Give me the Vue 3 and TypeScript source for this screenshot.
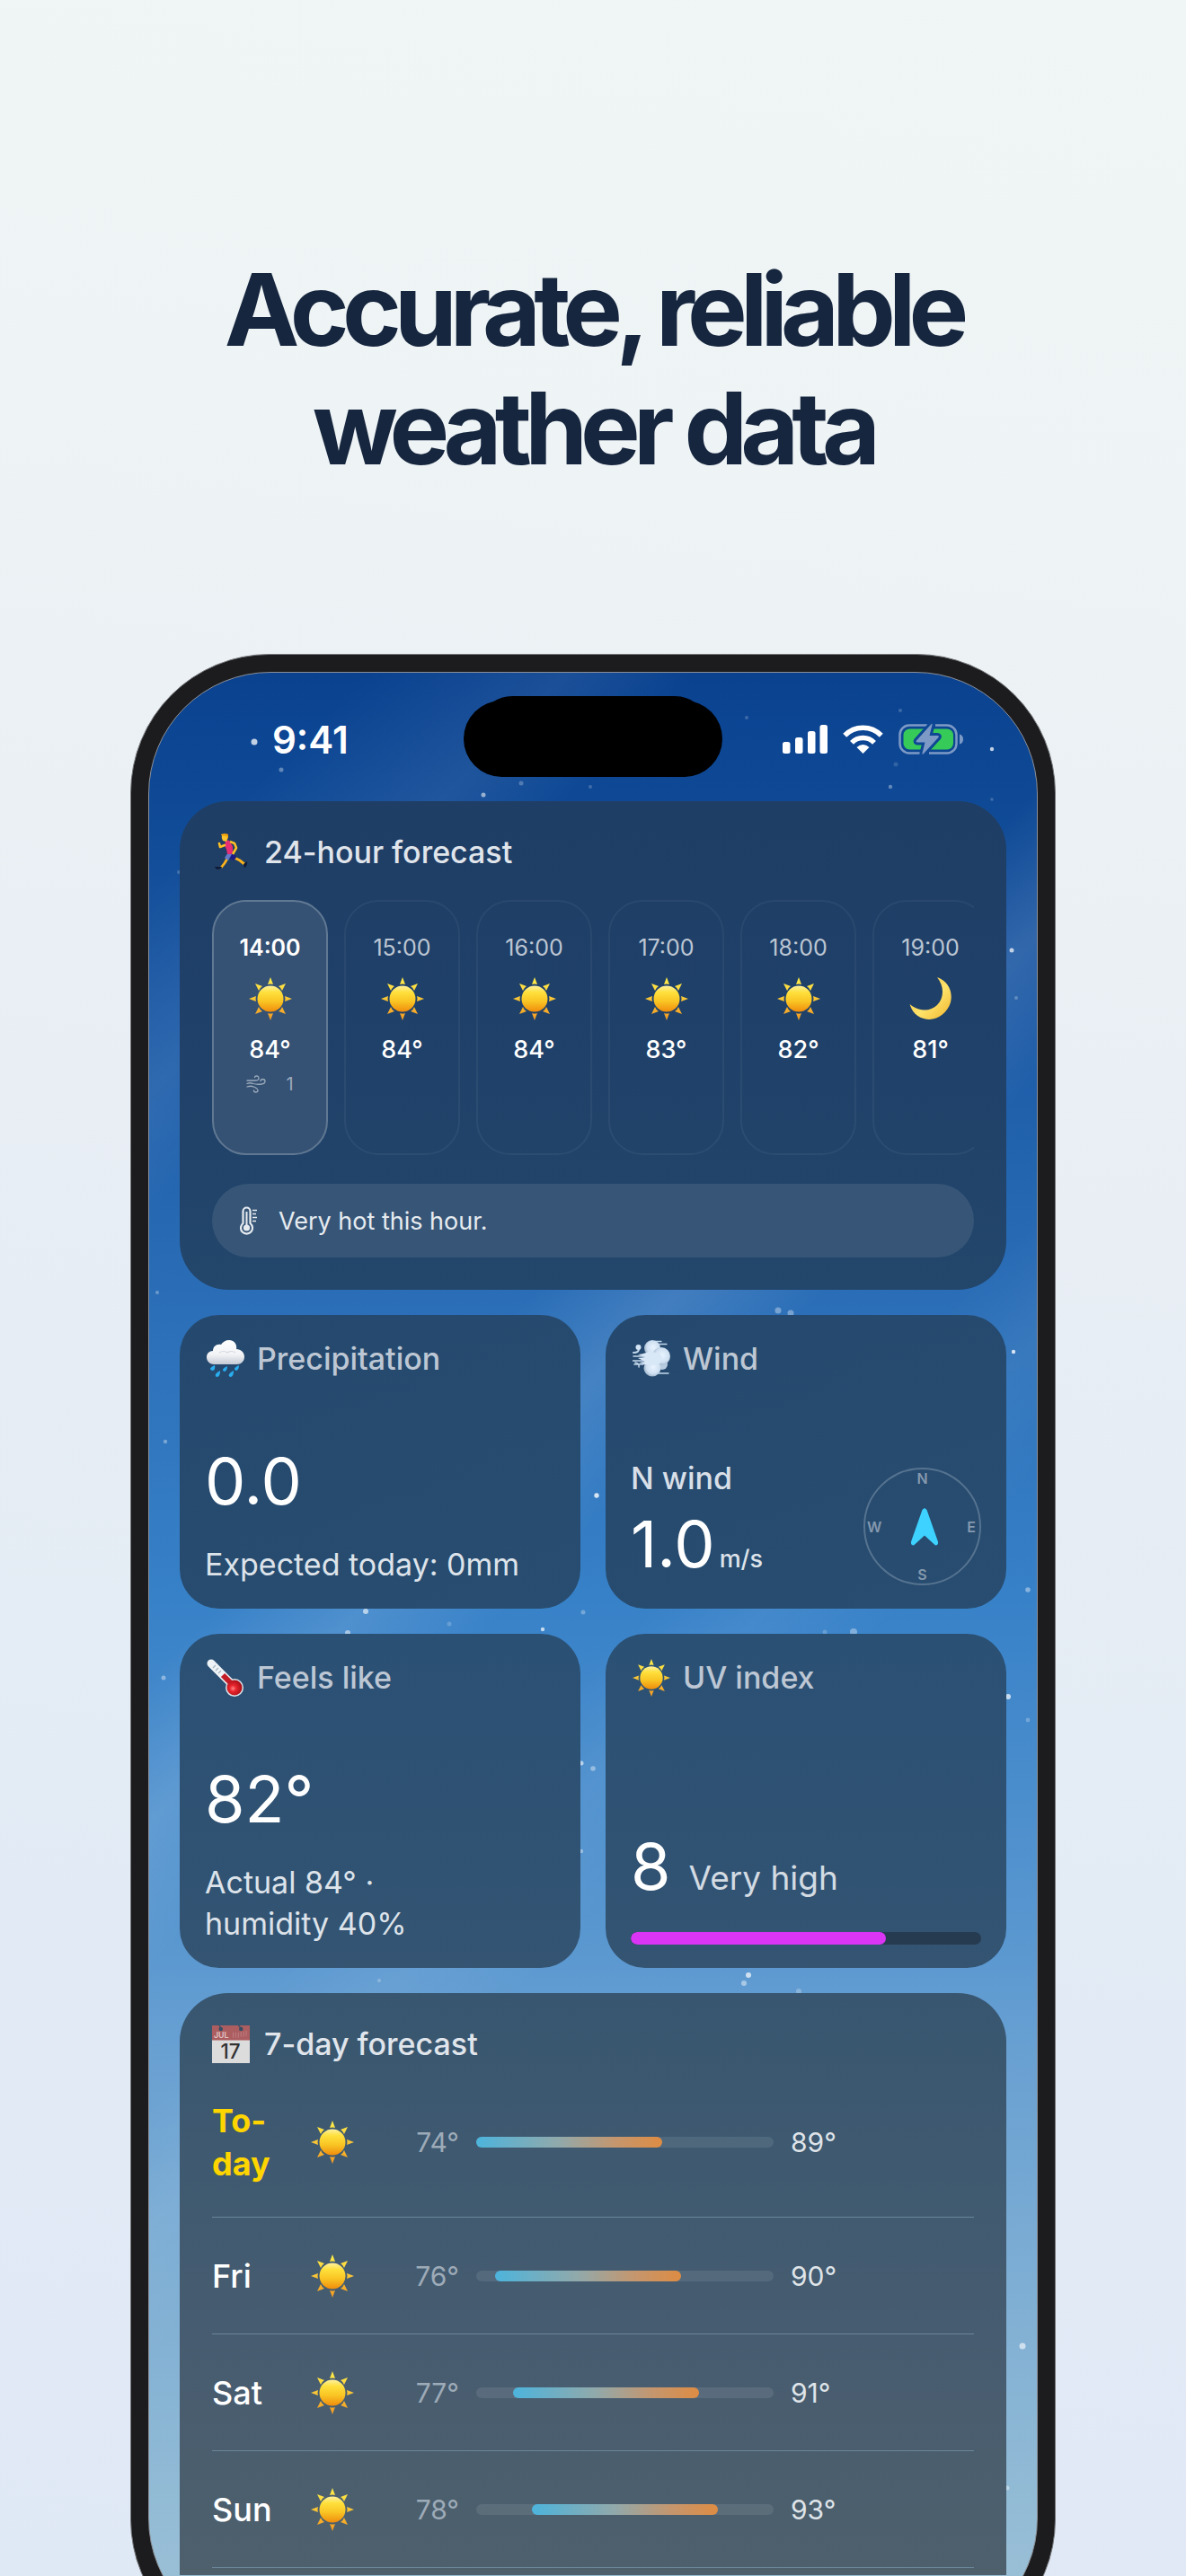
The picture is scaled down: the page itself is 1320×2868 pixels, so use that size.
<script setup lang="ts">
interface Hour { time: string; icon: string; temp: number; wind?: number }
interface Day { name: string; low: number; high: number; offset: number; today?: boolean }
type Star = [x: number, y: number, r: number, opacity: number]

const hours: Hour[] = [
  { time: '14:00', icon: 'sun', temp: 84, wind: 1 },
  { time: '15:00', icon: 'sun', temp: 84 },
  { time: '16:00', icon: 'sun', temp: 84 },
  { time: '17:00', icon: 'sun', temp: 83 },
  { time: '18:00', icon: 'sun', temp: 82 },
  { time: '19:00', icon: 'moon', temp: 81 },
]

const days: Day[] = [
  { name: 'To\u00adday', low: 74, high: 89, offset: 0, today: true },
  { name: 'Fri', low: 76, high: 90, offset: 6.25 },
  { name: 'Sat', low: 77, high: 91, offset: 12.5 },
  { name: 'Sun', low: 78, high: 93, offset: 18.75 },
]

const uv = { value: 8, max: 11, label: 'Very high' }

// Background particles, in the coordinates of the sky's view box
const stars: Star[] = [
  [117, 77, 3.5, 0.75], [147, 108, 2.5, 0.35], [372, 136, 2.5, 0.55], [414, 123, 2.5, 0.25],
  [491, 127, 2, 0.2], [665, 50, 2, 0.2], [836, 42, 2, 0.2], [831, 102, 2.5, 0.15],
  [825, 127, 2.2, 0.35], [938, 85, 2.2, 0.75], [938, 141, 1.8, 0.2], [33, 222, 2, 0.2],
  [960, 309, 2.5, 0.7], [965, 362, 2, 0.25], [9, 690, 2, 0.3], [700, 710, 3.5, 0.35],
  [714, 713, 3.5, 0.35], [962, 756, 2.2, 0.8], [18, 856, 2.2, 0.35], [498, 916, 2.7, 0.8],
  [978, 1021, 2.8, 0.4], [241, 1045, 3, 0.6], [483, 1046, 2.5, 0.3], [221, 1069, 3, 0.5],
  [334, 1059, 2.5, 0.2], [438, 1065, 2.2, 0.7], [752, 1068, 2.5, 0.2], [784, 1068, 4, 0.35],
  [956, 1140, 3, 0.7], [978, 1166, 2.4, 0.25], [16, 1119, 2.5, 0.4], [481, 1214, 2.5, 0.6],
  [494, 1220, 2.8, 0.4], [481, 1312, 2.2, 0.4], [256, 1456, 2, 0.25], [667, 1450, 3, 0.7],
  [662, 1459, 3, 0.45], [723, 1468, 3, 0.25], [972, 1863, 3.5, 0.6], [955, 2021, 2.5, 0.4],
]
</script>

<template>
  <main class="page">
    <svg class="defs" aria-hidden="true">
      <defs>
        <linearGradient id="sunFill" x1="0" y1="0" x2="0" y2="1">
          <stop offset="0" stop-color="#fff1a0" /><stop offset=".25" stop-color="#ffe03c" />
          <stop offset=".6" stop-color="#f9c524" /><stop offset="1" stop-color="#f08c0c" />
        </linearGradient>
        <linearGradient id="rayFill" gradientUnits="userSpaceOnUse" x1="0" y1="0" x2="0" y2="48">
          <stop offset="0" stop-color="#fff04a" /><stop offset="1" stop-color="#f29a22" />
        </linearGradient>
        <linearGradient id="moonFill" x1="0" y1="0" x2="1" y2="1">
          <stop offset="0" stop-color="#e8b83a" /><stop offset=".55" stop-color="#ffe36a" />
          <stop offset="1" stop-color="#efb32c" />
        </linearGradient>
        <linearGradient id="cloudFill" x1="0" y1="0" x2="0" y2="1">
          <stop offset="0" stop-color="#ffffff" /><stop offset=".6" stop-color="#f2f3f6" />
          <stop offset="1" stop-color="#c4cad4" />
        </linearGradient>
        <radialGradient id="puffFill" cx=".55" cy=".45" r=".6">
          <stop offset="0" stop-color="#e9f4ff" /><stop offset=".65" stop-color="#cfe0f1" />
          <stop offset="1" stop-color="#93a9c0" />
        </radialGradient>
        <radialGradient id="bulbFill" cx=".4" cy=".55" r=".6">
          <stop offset="0" stop-color="#ff8585" /><stop offset=".35" stop-color="#e8242c" />
          <stop offset="1" stop-color="#a50f18" />
        </radialGradient>
      </defs>
      <symbol id="sun" viewBox="0 0 48 48">
        <g fill="url(#rayFill)">
          <path d="M24 0l3 8q-3-1-6 0z" /><path d="M24 48l3-8q-3 1-6 0z" />
          <path d="M0 24l8-3q-1 3 0 6z" /><path d="M48 24l-8-3q1 3 0 6z" />
          <path d="M7 7l8 3q-3 2-4 5z" /><path d="M41 7l-8 3q3 2 4 5z" />
          <path d="M7 41l8-3q-3-2-4-5z" /><path d="M41 41l-8-3q3-2 4-5z" />
        </g>
        <circle cx="24" cy="24" r="14.5" fill="url(#sunFill)" />
      </symbol>
      <symbol id="moon" viewBox="0 0 48 48">
        <path d="M31 0C43 4 49 16 46 28C42 41 29 50 16 46C8 44 3 38 .5 30C11 39 24 38 31 31C39 23 39 10 31 0z" fill="url(#moonFill)" />
      </symbol>
      <symbol id="runner" viewBox="0 0 42 42">
        <path d="M17 28l-3 5-4 5" fill="none" stroke="#f9b21b" stroke-width="2.800" />
        <path d="M25 27l6 3 5 4" fill="none" stroke="#f9b21b" stroke-width="3" />
        <path d="M18 21l6 0 3 6-3 3-6-3z" fill="#1c1c86" />
        <path d="M14 27l4-6 4 2-4 7z" fill="#6478c8" />
        <path d="M15 8l4-.5 4 7 0 6-1 2q-3 1-5 0l-1-5-2-4z" fill="#e62e74" />
        <path d="M20 9l5 2 2 5-4 7" fill="none" stroke="#fdbf24" stroke-width="2.600" stroke-linejoin="round" />
        <path d="M14 13l-5 2-1-4" fill="none" stroke="#fdbf24" stroke-width="2.600" stroke-linecap="round" stroke-linejoin="round" />
        <path d="M11 2q5-2 6 1 1 3-1 6l-4-1q-2-3-1-6z" fill="#fcc42d" />
        <path d="M10 1q4-2 8 0v5l-2-3-6-1z" fill="#f0a20e" />
        <path d="M3 37l8 0-1 2-4 1q-2 0-3-3zM35 34l4-3q1 3-2 7-2-1-2-4z" fill="#101c38" />
      </symbol>
      <symbol id="rain" viewBox="0 0 42 42">
        <path d="M8 27C3 27 0 23 0 19c0-4 3-7 7-7 0-5 4-8 9-7 2-3 5-5 9-5 6 0 9 5 8 10 5 0 9 4 9 8.500C42 24 38 27 34 27z" fill="url(#cloudFill)" />
        <path d="M14 14q5-3 9 0q5-3 9 0" fill="none" stroke="#d5d8de" stroke-width="1.200" />
        <g fill="#29aef0">
          <path d="M9 28q1 5-2 6-3 0-3-2.500 1-2 5-3.500z" /><path d="M23 29q0 5-3 6-2 0-2-2.500 1-2 5-3.500z" />
          <path d="M36 28q0 5-3 6-2 0-2-2.500 1-2 5-3.500z" /><path d="M15 34q0 6-3 7-3 0-2-3 1-2 5-4z" />
          <path d="M30 34q0 6-3 7-3 0-2-3 1-2 5-4z" />
        </g>
      </symbol>
      <symbol id="gust" viewBox="0 0 42 42">
        <g fill="none" stroke="#c3d7eb" stroke-linecap="round">
          <path d="M1 14q6 0 6-4" stroke-width="2" /><path d="M1 18h14M0 23h14M2 27h10" stroke-width="1.500" />
          <path d="M3 25q5 1 4 5" stroke-width="1.500" /><path d="M24 1.500h8M24 4.500h14M28 37h12" stroke-width="1.300" />
        </g>
        <circle cx="6.500" cy="8" r="3" fill="#d5e5f5" />
        <circle cx="33" cy="27" r="6" fill="#b8cce0" />
        <circle cx="22" cy="9" r="9" fill="url(#puffFill)" />
        <circle cx="32" cy="18" r="10" fill="url(#puffFill)" />
        <circle cx="22" cy="31" r="9.500" fill="url(#puffFill)" />
        <path d="M6 16q9-1 13-4l13 4q2 6-2 10l-9 2q-7 0-14-3l7-1-8-4 8-1z" fill="#d9e8f7" />
      </symbol>
      <symbol id="fever" viewBox="0 0 42 42">
        <path d="M5 5l24 24" stroke="#eef3f7" stroke-width="9" stroke-linecap="round" />
        <path d="M7 10l3-3M10 13l3-3M13 16l3-3" stroke="#a9b4bf" stroke-width="1.300" />
        <circle cx="31" cy="32" r="10" fill="#d9e6ec" />
        <path d="M18 18l10 10" stroke="#c41c27" stroke-width="6" />
        <circle cx="31" cy="32" r="8.500" fill="url(#bulbFill)" />
      </symbol>
    </svg>

    <h1 class="headline">Accurate, reliable<br>weather data</h1>

    <section class="phone" aria-label="Weather app">
      <div class="screen">
        <svg class="sky" viewBox="0 0 988 2211" preserveAspectRatio="xMidYMin slice" aria-hidden="true">
          <circle v-for="([x, y, r, o], i) in stars" :key="i" :cx="x" :cy="y" :r="r" :opacity="o" fill="#fff" />
        </svg>

        <header class="status">
          <span class="clock">9:41</span>
          <svg class="island" viewBox="0 0 288 90" aria-hidden="true">
            <path d="M42 5.500Q35 7 32 7Q42 0 54 0H235Q247 0 257 7Q252 7 246 5.500z" />
            <rect y="5" width="288" height="85" rx="42.500" />
          </svg>
          <div class="indicators">
            <svg width="50" height="34" viewBox="0 0 50 34" fill="#fff" aria-label="Signal">
              <rect y="20" width="8.500" height="13" rx="2.500" /><rect x="14" y="15" width="8.500" height="18" rx="2.500" />
              <rect x="28" y="8" width="8.500" height="25" rx="2.500" /><rect x="41.500" y="1" width="8.500" height="32" rx="2.500" />
            </svg>
            <svg width="45" height="34" viewBox="0 0 45 34" fill="none" stroke="#fff" stroke-width="5.500" aria-label="Wi-Fi">
              <path d="M2.200 12.700A28.500 28.500 0 0 1 42.800 12.700" /><path d="M10 20.800A17.500 17.500 0 0 1 35 20.800" />
              <path d="M15.500 26Q22.500 20 29.500 26L22.500 33z" fill="#fff" stroke="none" />
            </svg>
            <svg width="72" height="36" viewBox="0 0 72 36" aria-label="Battery charging">
              <g fill="none" stroke="#7d9ac6" stroke-width="2.500">
                <path d="M32 2.500H12A10.500 10.500 0 0 0 1.500 13v10A10.500 10.500 0 0 0 12 33.500H24" />
                <path d="M41 2.500H54A10.500 10.500 0 0 1 64.500 13v10A10.500 10.500 0 0 1 54 33.500H34" />
              </g>
              <path d="M68 12.500q4 1 4 5.500t-4 5.500z" fill="#7d9ac6" />
              <rect x="5.500" y="6.500" width="55.500" height="23" rx="7" fill="#36ca58" />
              <path d="M37.500 2q.5-2-1.300-.5L20 19.500q-1 1.800 1 2h8.500L26.500 33.500q-.3 2 1.300.8L44.500 16q1-1.800-1-2h-9z" fill="#7d9ac6" stroke="#0e4794" stroke-width="6" paint-order="stroke" stroke-linejoin="round" />
            </svg>
          </div>
        </header>

        <div class="content">
          <section class="card wide hourly">
            <h2 class="card-title"><svg class="emoji"><use href="#runner" /></svg>24-hour forecast</h2>
            <ol class="hours">
              <li v-for="(h, i) in hours" :key="h.time" class="hour" :class="{ current: i === 0 }">
                <time class="hour-time">{{ h.time }}</time>
                <svg class="hour-icon"><use :href="'#' + h.icon" /></svg>
                <span class="hour-temp">{{ h.temp }}°</span>
                <span v-if="h.wind" class="hour-wind">
                  <svg width="22" height="20" viewBox="0 0 22 20" fill="none" stroke="currentColor" stroke-width="1.300" stroke-linecap="round">
                    <path d="M1 6h9q4 0 4-2.500T11.500 1Q9.500 1 9.500 2.500" />
                    <path d="M1 9.500q3-1.500 7 0 4 1.200 9 .5 4-.6 4-3T18.500 4.500Q16 4.500 16 6.500" />
                    <path d="M1 13q4-1.500 7.500 0 4.500 2 4.500 4T10.500 19Q8.500 19 8.500 17" />
                  </svg>{{ h.wind }}
                </span>
              </li>
            </ol>
            <p class="notice">
              <svg width="19" height="32" viewBox="0 0 19 32" fill="none" stroke="currentColor" aria-hidden="true">
                <path d="M3.500 19V5.500a4 4 0 0 1 8 0V19a6.500 6.500 0 1 1-8 0z" stroke-width="2.200" />
                <circle cx="7.500" cy="24" r="3.600" fill="currentColor" stroke="none" />
                <path d="M7.500 6v17" stroke-width="2" /><path d="M14 4.500h5M14 8.500h4M14 12.500h5M14 16.500h4" stroke-width="1.500" />
              </svg>
              Very hot this hour.
            </p>
          </section>

          <div class="tiles">
            <section class="card tile">
              <h2 class="card-title dim"><svg class="emoji"><use href="#rain" /></svg>Precipitation</h2>
              <p class="big">0.0</p>
              <p class="detail">Expected today: 0mm</p>
            </section>

            <section class="card tile">
              <h2 class="card-title dim"><svg class="emoji"><use href="#gust" /></svg>Wind</h2>
              <div class="wind-row">
                <div>
                  <p class="wind-name">N wind</p>
                  <p class="big">1.0<small>m/s</small></p>
                </div>
                <div class="compass">
                  <span>N</span>
                  <div class="compass-mid">
                    <span>W</span>
                    <svg width="32" height="42" viewBox="0 0 32 42" aria-label="Pointing north">
                      <path d="M13.300 2.500q2.700-4.500 5.400 0L31 37.500q.6 4-3 4L16 30.500 4 41.500q-3.600 0-3-4z" fill="#3dd2ff" />
                    </svg>
                    <span>E</span>
                  </div>
                  <span>S</span>
                </div>
              </div>
            </section>

            <section class="card tile lower">
              <h2 class="card-title dim"><svg class="emoji"><use href="#fever" /></svg>Feels like</h2>
              <p class="big">82°</p>
              <p class="detail">Actual 84° ·<br>humidity 40%</p>
            </section>

            <section class="card tile lower">
              <h2 class="card-title dim"><svg class="emoji"><use href="#sun" /></svg>UV index</h2>
              <p class="big uv">{{ uv.value }}<span>{{ uv.label }}</span></p>
              <div class="uv-track" role="meter" aria-label="UV index" :aria-valuenow="uv.value" aria-valuemin="0" :aria-valuemax="uv.max">
                <div class="uv-fill" :style="{ width: (uv.value / uv.max) * 100 + '%' }"></div>
              </div>
            </section>
          </div>

          <section class="card wide daily">
            <h2 class="card-title">
              <svg class="emoji" viewBox="0 0 43 43">
                <rect y="0" width="43" height="43" fill="#dcdcdd" /><path d="M0 0h43v17H0z" fill="#ac5d5f" />
                <circle cx="10" cy="4" r="2.300" fill="#364f66" /><circle cx="33" cy="4" r="2.300" fill="#364f66" />
                <path d="M8 0l3 4M30 0l4 4" stroke="#364f66" stroke-width="1.200" />
                <path d="M24 8v6M27 8v6M30 8v6M33 7v6M36 7v6M39 6v6" stroke="#c08082" />
                <text x="2" y="14" class="cal-month">JUL</text><text x="21" y="38" class="cal-day">17</text>
              </svg>7-day forecast
            </h2>
            <ol class="days">
              <li v-for="d in days" :key="d.name" class="day" :class="{ today: d.today }">
                <span class="day-name">{{ d.name }}</span>
                <svg class="day-icon"><use href="#sun" /></svg>
                <span class="low">{{ d.low }}°</span>
                <div class="range"><div class="range-fill" :style="{ marginLeft: d.offset + '%' }"></div></div>
                <span class="high">{{ d.high }}°</span>
              </li>
            </ol>
          </section>
        </div>
      </div>
    </section>
  </main>
</template>

<style>
body { margin: 0; }
</style>

<style scoped>
* { box-sizing: border-box; }
h1, h2, p, ol { margin: 0; padding: 0; }
ol { list-style: none; }
svg { display: block; flex: none; }
.defs { position: absolute; width: 0; height: 0; }
.page {
  height: 100vh;
  overflow: hidden;
  font-family: Inter, "Liberation Sans", sans-serif;
  background: linear-gradient(188deg, #f0f5f5 0%, #eef3f5 20%, #e8eef4 45%, #e2ebf5 75%, #dfe8f5 100%);
}
.headline {
  padding: 278px 32px 186px;
  font-size: 112px;
  line-height: 132px;
  font-weight: 700;
  letter-spacing: -0.07em;
  text-align: center;
  color: #16263f;
}
.phone {
  margin: 0 145px;
  aspect-ratio: 1030 / 2232;
  border: 1px solid #77797c;
  border-radius: 155px;
  background: #1c1c1e;
  padding: 19px;
}
.screen {
  position: relative;
  height: 100%;
  overflow: hidden;
  border: 1px solid #8b8f96;
  border-radius: 136px;
  background:
    linear-gradient(135deg, transparent 170px, #ffffff12 330px, transparent 430px, transparent 790px, #ffffff1c 904px, transparent 1020px, transparent 1130px, #ffffff0e 1223px, transparent 1330px),
    linear-gradient(#0a4290 0%, #104b97 8%, #1a56a2 15%, #2263ae 24%, #2a6db6 31%, #3781c8 47%, #5b98d0 65%, #68a0d2 70%, #9fc3d6 100%);
}
.sky { position: absolute; inset: 0; width: 100%; height: 100%; }
.status {
  position: relative;
  display: grid;
  grid-template-columns: 1fr 288px 1fr;
  align-items: start;
  height: 143px;
  padding-top: 26px;
}
.clock {
  padding: 24px 0 0 137px;
  font-size: 42px;
  line-height: 50px;
  font-weight: 600;
  color: #fff;
}
.island { width: 288px; height: 90px; }
.indicators { display: flex; align-items: center; gap: 17px; padding: 30px 0 0 67px; }
.content { position: relative; padding: 0 34px; }
.card { color: #fff; }
.wide { padding: 36px; border-radius: 54px; }
.card-title {
  display: flex;
  align-items: center;
  gap: 16px;
  font-size: 34px;
  line-height: 42px;
  font-weight: 500;
  color: #e0e5eb;
}
.card-title.dim { gap: 14px; color: #bdc7d4; padding-left: 2px; }
.emoji { width: 42px; height: 42px; }
.hourly { background: linear-gradient(#1f3e65, #1f4069 40%, #23466b); }
.hours { display: flex; gap: 18px; margin-top: 32px; overflow: hidden; }
.hour {
  flex: none;
  display: flex;
  flex-direction: column;
  align-items: center;
  width: 129px;
  height: 284px;
  padding-top: 36px;
  border: 2px solid #ffffff0d;
  border-radius: 38px;
}
.hour.current { border-color: #607892; background: #355173; }
.hour-time { font-size: 25px; line-height: 30px; color: #bcc6d3; }
.current .hour-time { font-weight: 600; color: #fff; }
.hour-icon { width: 48px; height: 48px; margin-top: 18px; }
.hour-temp { margin-top: 16px; font-size: 27px; line-height: 34px; font-weight: 500; }
.hour-wind {
  display: flex;
  align-items: center;
  gap: 22px;
  margin-top: 7px;
  font-size: 20px;
  line-height: 28px;
  color: #9aaabc;
}
.notice {
  display: flex;
  align-items: center;
  gap: 24px;
  height: 82px;
  margin-top: 32px;
  padding-left: 31px;
  border-radius: 41px;
  background: #375677;
  font-size: 27px;
  color: #e6ebf0;
}
.tiles { display: grid; grid-template-columns: 1fr 1fr; gap: 28px; margin: 28px 0; }
.tile {
  display: flex;
  flex-direction: column;
  min-height: 327px;
  padding: 28px 28px 26px;
  border-radius: 44px;
  background: linear-gradient(160deg, #25496e, #284d70);
}
.tile.lower { min-height: 372px; background: linear-gradient(#2a5074, #2f5273 55%, #345472); }
.big { margin-top: auto; font-size: 72px; line-height: 92px; font-weight: 400; }
.big small { margin-left: 5px; font-size: 27px; line-height: 28px; font-weight: 500; color: #dde3ea; }
.detail { margin-top: 24px; font-size: 34px; line-height: 46px; color: #dde3ea; }
.wind-row { display: flex; align-items: flex-end; justify-content: space-between; margin-top: auto; }
.wind-name { margin-bottom: 4px; font-size: 34px; line-height: 46px; font-weight: 500; color: #d8dfe7; }
.compass {
  display: flex;
  flex-direction: column;
  align-items: center;
  justify-content: space-between;
  width: 131px;
  height: 131px;
  border: 2px solid #567390;
  border-radius: 50%;
  font-size: 16px;
  line-height: 20px;
  font-weight: 600;
  color: #8599ae;
}
.compass-mid { display: flex; align-items: center; justify-content: space-between; width: 123px; padding-right: 2px; }
.uv span { margin-left: 20px; font-size: 37px; line-height: 38px; color: #d3dbe3; }
.uv-track { height: 14px; margin-top: 27px; border-radius: 7px; background: #263b50; overflow: hidden; }
.uv-fill { height: 100%; border-radius: 7px; background: #da35f4; }
.daily {
  padding-bottom: 8px;
  border-radius: 54px 54px 0 0;
  background: linear-gradient(#385670, #405a70 35%, #475c70 60%, #4e606c);
}
.cal-month { font-size: 9px; font-weight: 600; fill: #e0c5c6; }
.cal-day { font-size: 23px; font-weight: 500; text-anchor: middle; fill: #333; }
.days { margin-top: 5px; }
.day {
  display: grid;
  grid-template-columns: 80px 108px 87px minmax(0, 331px) 1fr;
  align-items: center;
  min-height: 130px;
  padding: 35px 0;
  border-bottom: 1px solid #6a8699;
}
.day-name { font-size: 36px; line-height: 48px; font-weight: 500; }
.today .day-name { font-weight: 700; color: #ffd500; }
.day-icon { width: 48px; height: 48px; justify-self: center; }
.low, .high { font-size: 30px; line-height: 36px; }
.low { text-align: right; color: #9dabb8; }
.range { height: 12px; margin-left: 19px; margin-right: -19px; border-radius: 6px; background: #ffffff17; }
.high { padding-left: 38px; color: #dfe4e9; }
.range-fill { width: 62.5%; height: 100%; border-radius: 6px; background: linear-gradient(90deg, #4db4dc, #92a9aa 45%, #c5966e 75%, #de8c43); }
</style>
